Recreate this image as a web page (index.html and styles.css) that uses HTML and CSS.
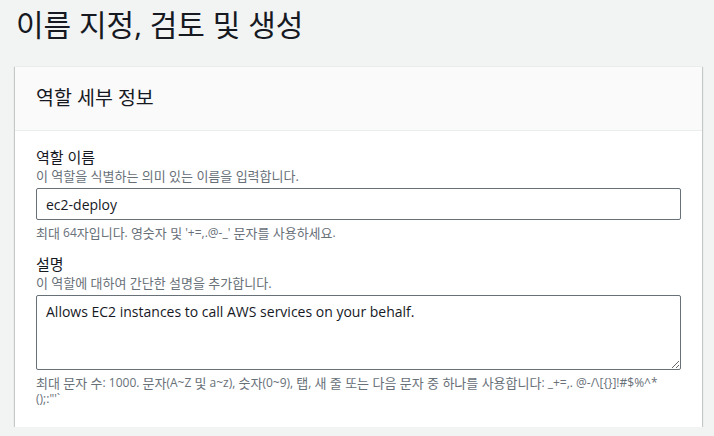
FILE: index.html
```html
<!DOCTYPE html>
<html lang="ko">
<head>
<meta charset="utf-8">
<link rel="stylesheet" href="styles.css">
</head>
<body>
<div class="page">
  <h1 class="title">이름 지정, 검토 및 생성</h1>
  <div class="card">
    <div class="card-header">
      <h2 class="card-title">역할 세부 정보</h2>
    </div>
    <div class="card-body">
      <div class="field">
        <div class="label">역할 이름</div>
        <div class="desc">이 역할을 식별하는 의미 있는 이름을 입력합니다.</div>
        <input class="input" type="text" value="ec2-deploy">
        <div class="hint"><span class="k">최대</span> 64<span class="k">자입니다</span>. <span class="k">영숫자 및</span> '+=,.@-_' <span class="k">문자를 사용하세요</span>.</div>
      </div>
      <div class="field">
        <div class="label">설명</div>
        <div class="desc">이 역할에 대하여 간단한 설명을 추가합니다.</div>
        <textarea class="textarea">Allows EC2 instances to call AWS services on your behalf.</textarea>
        <div class="hint"><span class="k">최대 문자 수</span>: 1000. <span class="k">문자</span>(A~Z <span class="k">및</span> a~z), <span class="k">숫자</span>(0~9), <span class="k">탭</span>, <span class="k">새 줄 또는 다음 문자 중 하나를 사용합니다</span>: _+=,. @-/\[{}]!#$%^*<wbr>();:"'`</div>
      </div>
    </div>
  </div>
</div>
</body>
</html>
```

FILE: styles.css
```css
html, body {
  margin: 0;
  padding: 0;
  background: #f2f3f3;
}
body {
  font-family: "Open Sans", "Noto Sans CJK KR", sans-serif;
  color: #16191f;
}
.page {
  padding: 0 12px 0 15px;
}
.title {
  margin: 0;
  padding: 6px 0 0 1px;
  font-size: 30px;
  font-weight: 400;
  line-height: 38px;
  height: 62px;
  box-sizing: border-box;
}
.card {
  background: #fff;
  box-shadow: 0 1px 1px 0 rgba(0, 28, 36, 0.3), 1px 1px 1px 0 rgba(0, 28, 36, 0.15), -1px 1px 1px 0 rgba(0, 28, 36, 0.15);
  border-top: 1px solid #eaeded;
  margin-top: 4px;
}
.card-header {
  background: #fafafa;
  border-bottom: 1px solid #eaeded;
  padding: 19px 21px 21px;
}
.card-title {
  margin: 0;
  font-size: 19.5px;
  font-weight: 400;
  line-height: 23px;
}
.card-body {
  padding: 15px 21px 19px;
}
.field + .field {
  margin-top: 11px;
}
.label {
  font-size: 15px;
  line-height: 22px;
}
.desc {
  font-size: 13px;
  line-height: 16px;
  color: #687078;
  margin-bottom: 4px;
}
.input, .textarea {
  display: block;
  width: 100%;
  box-sizing: border-box;
  border: 1px solid #687078;
  border-radius: 2px;
  font-family: "Open Sans", "Noto Sans CJK KR", sans-serif;
  font-size: 14px;
  color: #16191f;
  background: #fff;
  margin: 0;
  outline: none;
}
.input {
  height: 32px;
  padding: 0 9px;
}
.textarea {
  height: 75px;
  padding: 6px 9px;
  line-height: 20px;
  resize: vertical;
}
.hint {
  font-size: 12px;
  line-height: 16.5px;
  color: #687078;
  margin-top: 5px;
  word-break: break-all;
}
.k {
  display: inline-block;
  font-size: 13px;
  line-height: 16px;
  height: 16px;
  vertical-align: top;
}
```
